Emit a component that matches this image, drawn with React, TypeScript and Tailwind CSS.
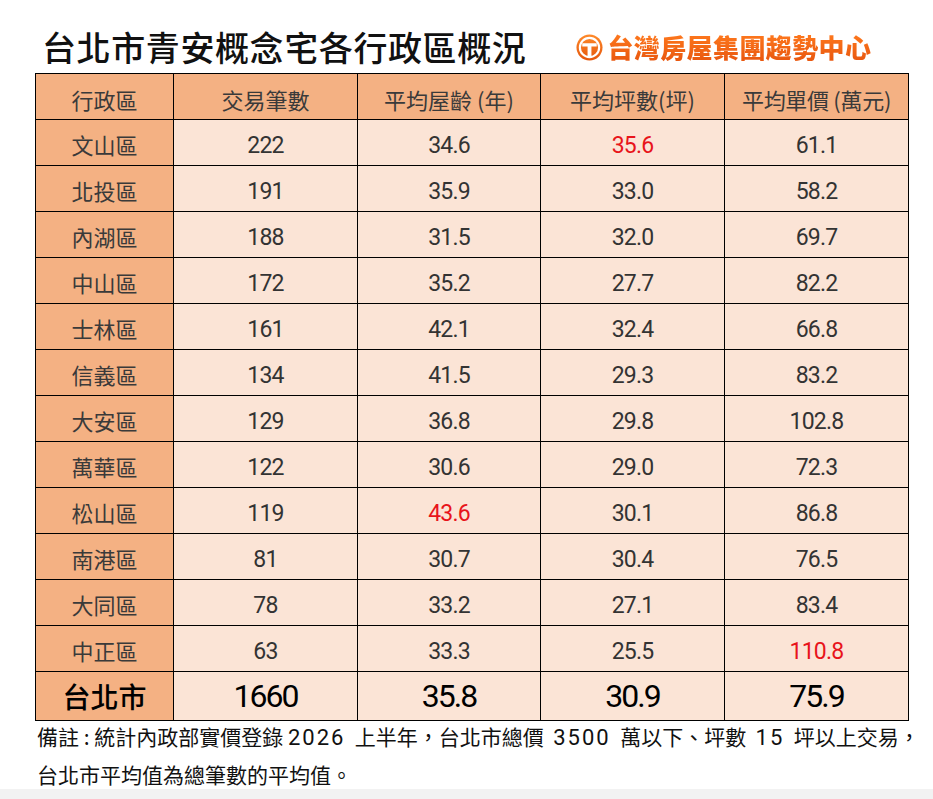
import React from "react";

type Row = {
  district: string;
  count: string;
  age: string;
  area: string;
  price: string;
  red?: "age" | "area" | "price";
};

const rows: Row[] = [
  { district: "文山區", count: "222", age: "34.6", area: "35.6", price: "61.1", red: "area" },
  { district: "北投區", count: "191", age: "35.9", area: "33.0", price: "58.2" },
  { district: "內湖區", count: "188", age: "31.5", area: "32.0", price: "69.7" },
  { district: "中山區", count: "172", age: "35.2", area: "27.7", price: "82.2" },
  { district: "士林區", count: "161", age: "42.1", area: "32.4", price: "66.8" },
  { district: "信義區", count: "134", age: "41.5", area: "29.3", price: "83.2" },
  { district: "大安區", count: "129", age: "36.8", area: "29.8", price: "102.8" },
  { district: "萬華區", count: "122", age: "30.6", area: "29.0", price: "72.3" },
  { district: "松山區", count: "119", age: "43.6", area: "30.1", price: "86.8", red: "age" },
  { district: "南港區", count: "81", age: "30.7", area: "30.4", price: "76.5" },
  { district: "大同區", count: "78", age: "33.2", area: "27.1", price: "83.4" },
  { district: "中正區", count: "63", age: "33.3", area: "25.5", price: "110.8", red: "price" },
];

const cjk = "font-['Noto_Sans_CJK_TC','Noto_Sans_CJK_SC',sans-serif]";
const num = "font-['Roboto','Noto_Sans_CJK_TC',sans-serif]";

function LogoMark() {
  return (
    <svg width="27" height="27" viewBox="0 0 28 28">
      <defs>
        <linearGradient id="lg" x1="0" y1="0" x2="0" y2="1">
          <stop offset="0" stopColor="#ff8a2a" />
          <stop offset="1" stopColor="#e4560c" />
        </linearGradient>
      </defs>
      <circle cx="14" cy="14" r="13.5" fill="url(#lg)" />
      <circle cx="14" cy="14" r="10" fill="none" stroke="#fff" strokeWidth="2.2" />
      <path d="M6.5 9.5 H21.5 V13 H16 V23.5 H12 V13 H6.5 Z" fill="#fff" />
    </svg>
  );
}

export default function App() {
  const cell = "border border-black text-center align-middle";
  const body = `${cell} bg-[#fbe4d6] ${num} text-[23px] tracking-[-0.8px] pt-[8px]`;
  const total = `${cell} bg-[#fbe4d6] ${num} text-[32px] tracking-[-2px] text-black`;
  const noteNum = `${num} text-[22px] tracking-[2px]`;

  return (
    <div className="w-[933px] min-h-[799px] bg-white flex flex-col">
      {/* Title */}
      <div className="h-[73px] flex items-end pb-[4px] pl-[42px]">
        <h1 className={`${cjk} text-[34px] leading-[44px] font-medium text-[#111] tracking-[0.6px]`}>
          台北市青安概念宅各行政區概況
        </h1>
        <div className="ml-[50px] mb-[7px] flex items-center gap-[4px]">
          <LogoMark />
          <span
            className={`${cjk} text-[26px] leading-[30px] font-black tracking-[0.4px] bg-gradient-to-b from-[#ff7a1e] to-[#e8560e] bg-clip-text text-transparent`}
          >
            台灣房屋集團趨勢中心
          </span>
        </div>
      </div>

      {/* Table */}
      <div className="pl-[35px]">
        <table className="border-collapse w-[873px] table-fixed">
          <colgroup>
            <col className="w-[138px]" />
            <col className="w-[184px]" />
            <col className="w-[183px]" />
            <col className="w-[184px]" />
            <col className="w-[184px]" />
          </colgroup>
          <thead>
            <tr className={`h-[46px] bg-[#f4b183] ${cjk} text-[22px] text-[#3a3a3a]`}>
              <th className={`${cell} font-normal pt-[5px]`}>行政區</th>
              <th className={`${cell} font-normal pt-[5px]`}>交易筆數</th>
              <th className={`${cell} font-normal pt-[5px]`}>平均屋齡 (年)</th>
              <th className={`${cell} font-normal pt-[5px]`}>平均坪數(坪)</th>
              <th className={`${cell} font-normal pt-[5px] tracking-[-0.3px]`}>平均單價 (萬元)</th>
            </tr>
          </thead>
          <tbody>
            {rows.map((r) => (
              <tr key={r.district} className="h-[46px]">
                <td className={`${cell} bg-[#f4b183] ${cjk} text-[22px] text-[#3a3a3a] pt-[4px]`}>{r.district}</td>
                <td className={`${body} text-[#333]`}>{r.count}</td>
                <td className={`${body} ${r.red === "age" ? "text-[#e8141b]" : "text-[#333]"}`}>{r.age}</td>
                <td className={`${body} ${r.red === "area" ? "text-[#e8141b]" : "text-[#333]"}`}>{r.area}</td>
                <td className={`${body} ${r.red === "price" ? "text-[#e8141b]" : "text-[#333]"}`}>{r.price}</td>
              </tr>
            ))}
            <tr className="h-[45px]">
              <td className={`${cell} bg-[#f4b183] ${cjk} text-[28px] font-medium text-black`}>台北市</td>
              <td className={total}>1660</td>
              <td className={total}>35.8</td>
              <td className={total}>30.9</td>
              <td className={total}>75.9</td>
            </tr>
          </tbody>
        </table>
      </div>

      {/* Note */}
      <div className={`pl-[37px] h-[71px] -mt-[3px] ${cjk} text-[21px] leading-[36px] text-[#111] whitespace-pre`}>
        <p>
          備註 : 統計內政部實價登錄 <span className={noteNum}>2026</span>  上半年，台北市總價  <span className={noteNum}>3500</span>  萬以下、坪數  <span className={noteNum}>15</span>  坪以上交易，
        </p>
        <p>台北市平均值為總筆數的平均值。</p>
      </div>

      <div className="flex-1 bg-[#f2f2f2]" />
    </div>
  );
}
